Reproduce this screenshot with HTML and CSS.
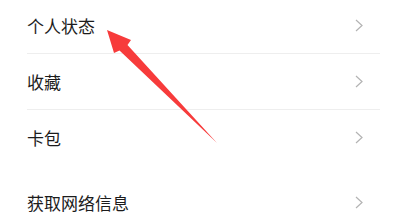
FILE: index.html
```html
<!DOCTYPE html>
<html lang="zh">
<head>
<meta charset="utf-8">
<link rel="stylesheet" href="styles.css">
</head>
<body>
<div class="page">
  <div class="group">
    <div class="row"><span class="label">个人状态</span><svg class="chev" viewBox="0 0 8 13"><path d="M1 1 L7 6.5 L1 12" /></svg></div>
    <div class="row"><span class="label">收藏</span><svg class="chev" viewBox="0 0 8 13"><path d="M1 1 L7 6.5 L1 12" /></svg></div>
    <div class="row last"><span class="label">卡包</span><svg class="chev" viewBox="0 0 8 13"><path d="M1 1 L7 6.5 L1 12" /></svg></div>
  </div>
  <div class="group second">
    <div class="row last"><span class="label">获取网络信息</span><svg class="chev" viewBox="0 0 8 13"><path d="M1 1 L7 6.5 L1 12" /></svg></div>
  </div>
  <svg class="arrow" viewBox="0 0 393 214" width="393" height="214">
    <polygon points="107,30 131,40 127.5,45 217,143 119.5,50.5 114,53" />
  </svg>
</div>
</body>
</html>
```
FILE: styles.css
```css
html, body {
  margin: 0;
  padding: 0;
  background: #ffffff;
}
.page {
  position: relative;
  width: 393px;
  height: 214px;
  overflow: hidden;
  font-family: "Noto Sans CJK SC", "Noto Sans", sans-serif;
}
.group {
  margin-top: -2px;
}
.group.second {
  margin-top: 9px;
}
.row {
  margin-left: 27px;
  margin-right: 13px;
  padding-right: 17px;
  height: 55px;
  display: flex;
  align-items: center;
  justify-content: space-between;
  border-bottom: 1px solid #eeeeee;
}
.row.last {
  border-bottom-color: transparent;
}
.label {
  font-size: 17px;
  color: #1c1c1c;
  line-height: 1;
}
.chev {
  width: 8px;
  height: 13px;
  fill: none;
  stroke: #b3b3b3;
  stroke-width: 1.2;
}
.arrow {
  position: absolute;
  left: 0;
  top: 0;
}
.arrow polygon {
  fill: #f73b3b;
}
```
